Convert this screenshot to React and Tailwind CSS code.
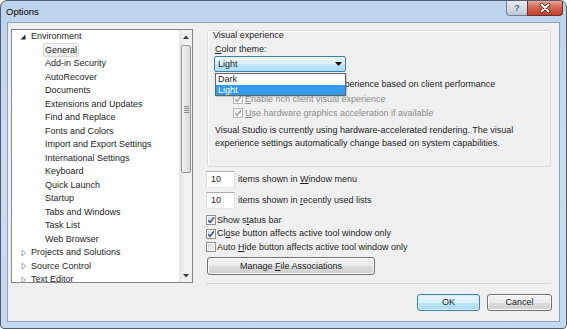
import React from "react";

function Check({ checked, disabled }) {
  return (
    <span
      className={
        disabled
          ? "w-[10px] h-[10px] shrink-0 border border-[#b8b8b8] bg-[#f4f4f4] flex items-center justify-center"
          : "w-[10px] h-[10px] shrink-0 border border-[#8e8f8f] bg-linear-to-br from-[#cdd1d6] to-[#f8f8f8] shadow-[inset_0_0_0_1px_#ffffff] flex items-center justify-center"
      }
    >
      {checked && (
        <svg width="8" height="8" viewBox="0 0 8 8">
          <path
            d="M1.2 4.2 L3.1 6.4 L6.9 1.2"
            fill="none"
            stroke={disabled ? "#a6a6a6" : "#3b4f8f"}
            strokeWidth="1.5"
          />
        </svg>
      )}
    </span>
  );
}

function Expanded() {
  return (
    <svg width="6" height="6" viewBox="0 0 6 6">
      <path d="M5.5 0.5 L5.5 5.5 L0.5 5.5 Z" fill="#262626" />
    </svg>
  );
}

function Collapsed() {
  return (
    <svg width="6" height="8" viewBox="0 0 6 8">
      <path d="M1 1 L4.8 4 L1 7 Z" fill="none" stroke="#a6a6a6" strokeWidth="1" />
    </svg>
  );
}

const children = [
  "Add-in Security",
  "AutoRecover",
  "Documents",
  "Extensions and Updates",
  "Find and Replace",
  "Fonts and Colors",
  "Import and Export Settings",
  "International Settings",
  "Keyboard",
  "Quick Launch",
  "Startup",
  "Tabs and Windows",
  "Task List",
  "Web Browser",
];

export default function App() {
  return (
    <div className="w-[567px] h-[329px] overflow-hidden bg-white font-['Liberation_Sans',Arial,sans-serif] text-[9px] text-[#1e1e1e] leading-none">
      <div className="w-full h-full flex flex-col border border-[#4f5d6e] rounded-t-[7px] rounded-b-[4px] bg-linear-to-b from-[#bcd3eb] via-[#cadef2] to-[#c4d9ee] px-[6px] pb-[6px]">
        {/* title bar */}
        <div className="h-[21px] shrink-0 flex items-start">
          <span className="mt-[6px] -ml-[1px] text-[9.5px] text-black">Options</span>
          <div className="ml-auto -mr-[3px] flex">
            <div className="w-[21px] h-[15px] border border-[#6f7f94] border-t-0 border-r-0 rounded-bl-[4px] bg-linear-to-b from-[#e4ecf5] via-[#d2dde9] to-[#b9c9dc] flex items-center justify-center text-[9px] font-bold text-[#5d6877]">
              ?
            </div>
            <div className="w-[36px] h-[15px] border border-[#6b3127] border-t-0 rounded-br-[4px] bg-linear-to-b from-[#e8a798] via-[#d0604a] to-[#c0432c] flex items-center justify-center">
              <svg width="12" height="10" viewBox="0 0 12 10">
                <path d="M2.5 1.5 L9.5 8.5 M9.5 1.5 L2.5 8.5" stroke="#5a2118" strokeWidth="3.6" strokeLinecap="round" />
                <path d="M2.5 1.5 L9.5 8.5 M9.5 1.5 L2.5 8.5" stroke="#ffffff" strokeWidth="2" strokeLinecap="round" />
              </svg>
            </div>
          </div>
        </div>

        {/* client area */}
        <div className="flex-1 border border-[#8fa2b8] bg-[#f0f0f0] flex flex-col pl-[3px] pr-[8px] pt-[6px]">
          <div className="h-[255px] flex items-start">
            {/* tree */}
            <div className="w-[182px] h-[254px] border border-[#828790] bg-white flex overflow-hidden">
              <div className="flex-1 overflow-hidden">
                <div className="h-[13.5px] flex items-center">
                  <span className="w-[19px] pl-[8px] flex items-center">
                    <Expanded />
                  </span>
                  <span>Environment</span>
                </div>
                <div className="h-[13.5px] flex items-center pl-[31px]">
                  <span className="h-[14px] px-[1px] flex items-center border border-[#d9d9d9] rounded-[2px] bg-linear-to-b from-[#f8f8f8] to-[#ececec]">
                    General
                  </span>
                </div>
                {children.map((c) => (
                  <div key={c} className="h-[13.5px] flex items-center pl-[33px]">
                    {c}
                  </div>
                ))}
                {["Projects and Solutions", "Source Control", "Text Editor"].map((c) => (
                  <div key={c} className="h-[13.5px] flex items-center">
                    <span className="w-[19px] pl-[9px] flex items-center">
                      <Collapsed />
                    </span>
                    <span>{c}</span>
                  </div>
                ))}
              </div>
              {/* scrollbar */}
              <div className="w-[13px] h-full flex flex-col bg-linear-to-r from-[#e6e6e6] via-[#f4f4f4] to-[#f0f0f0] border-l border-[#e8e8e8]">
                <div className="h-[13px] flex items-center justify-center">
                  <svg width="6" height="4" viewBox="0 0 6 4">
                    <path d="M0 4 L3 0.5 L6 4 Z" fill="#404040" />
                  </svg>
                </div>
                <div className="mt-[2px] mx-[1px] h-[128px] border border-[#959595] rounded-[2px] bg-linear-to-r from-[#f2f2f2] via-[#e6e6e6] to-[#d8d8d8] flex items-center justify-center">
                  <div className="flex flex-col gap-[1px]">
                    <div className="w-[5px] h-px bg-[#8a8a8a]" />
                    <div className="w-[5px] h-px bg-[#8a8a8a]" />
                    <div className="w-[5px] h-px bg-[#8a8a8a]" />
                    <div className="w-[5px] h-px bg-[#8a8a8a]" />
                  </div>
                </div>
                <div className="mt-auto h-[13px] flex items-center justify-center">
                  <svg width="6" height="4" viewBox="0 0 6 4">
                    <path d="M0 0 L3 3.5 L6 0 Z" fill="#404040" />
                  </svg>
                </div>
              </div>
            </div>

            {/* right column */}
            <div className="ml-[13px] flex-1 h-full flex flex-col">
              {/* group box */}
              <div className="mt-[1px] ml-[1px] h-[137px] border border-[#d5dfe5] rounded-[3px] pl-[5px] shadow-[inset_1px_1px_0_#ffffff]">
                <div className="h-[9px] leading-[9px]">Visual experience</div>
                <div className="mt-[3px] h-[12px] leading-[12px] pl-[2px]">
                  <u>C</u>olor theme:
                </div>
                <div className="relative mt-[1px] ml-[1px] w-[132px] h-[16px] border border-[#3c7fb1] rounded-[2px] bg-[linear-gradient(to_bottom,#eef7fd_0%,#dcf1fc_50%,#c2e7fc_50%,#acdcf6_100%)] flex items-center pl-[3px]">
                  <span>Light</span>
                  <svg className="ml-auto mr-[3px]" width="7" height="4" viewBox="0 0 7 4">
                    <path d="M0 0 L7 0 L3.5 4 Z" fill="#000000" />
                  </svg>
                  <div className="absolute z-10 top-[16px] left-[0px] w-[131px] h-[23px] border border-[#646464] bg-white p-[0px] shadow-[1px_1px_1px_rgba(0,0,0,0.15)]">
                    <div className="h-[11px] leading-[11px] pl-[2px]">Dark</div>
                    <div className="h-[10px] leading-[10px] pl-[2px] bg-[#3399ff] text-white">Light</div>
                  </div>
                </div>
                <div className="mt-[6px] h-[12px] pl-[3px] flex items-center gap-[1px]">
                  <Check checked />
                  <span>
                    <u>A</u>utomatically adjust visual experience based on client performance
                  </span>
                </div>
                <div className="mt-[3px] h-[12px] pl-[20px] flex items-center gap-[2px] text-[#8d8d8d]">
                  <Check checked disabled />
                  <span>
                    <u>E</u>nable rich client visual experience
                  </span>
                </div>
                <div className="mt-[2px] h-[12px] pl-[20px] flex items-center gap-[2px] text-[#8d8d8d]">
                  <Check checked disabled />
                  <span>
                    <u>U</u>se hardware graphics acceleration if available
                  </span>
                </div>
                <p className="mt-[5px] pl-[2px] leading-[13px]">
                  Visual Studio is currently using hardware-accelerated rendering. The visual
                  <br />
                  experience settings automatically change based on system capabilities.
                </p>
              </div>

              {/* text boxes */}
              <div className="mt-[4px] flex items-center">
                <div className="w-[29px] h-[17px] border border-[#abadb3] border-x-[#dbdfe6] border-b-[#e3e9ef] bg-white flex items-center pl-[4px]">
                  10
                </div>
                <span className="ml-[3px]">
                  items shown in <u>W</u>indow menu
                </span>
              </div>
              <div className="mt-[4px] flex items-center">
                <div className="w-[29px] h-[17px] border border-[#abadb3] border-x-[#dbdfe6] border-b-[#e3e9ef] bg-white flex items-center pl-[4px]">
                  10
                </div>
                <span className="ml-[3px]">
                  items shown in <u>r</u>ecently used lists
                </span>
              </div>

              {/* checkboxes */}
              <div className="mt-[4.5px] h-[13.5px] flex items-center gap-[1px]">
                <Check checked />
                <span>
                  Show s<u>t</u>atus bar
                </span>
              </div>
              <div className="h-[13.5px] flex items-center gap-[1px]">
                <Check checked />
                <span>
                  Cl<u>o</u>se button affects active tool window only
                </span>
              </div>
              <div className="h-[13.5px] flex items-center gap-[1px]">
                <Check />
                <span>
                  Auto <u>H</u>ide button affects active tool window only
                </span>
              </div>

              <div className="mt-[3px] ml-[1px] w-[168px] h-[18px] border border-[#707070] rounded-[3px] bg-[linear-gradient(to_bottom,#f2f2f2_0%,#ebebeb_50%,#dddddd_50%,#cfcfcf_100%)] shadow-[inset_0_0_0_1px_#fcfcfc] flex items-center justify-center">
                <span>
                  Manage <u>F</u>ile Associations
                </span>
              </div>

              <div className="mt-auto h-px bg-[#d5d5d5]" />
            </div>
          </div>

          {/* bottom buttons */}
          <div className="mt-[10px] -mr-[1px] flex justify-end gap-[7px]">
            <div className="w-[63px] h-[17px] border border-[#3c7fb1] rounded-[3px] bg-[linear-gradient(to_bottom,#eaf6fd_0%,#d9f0fc_50%,#bee6fd_50%,#a7d9f5_100%)] shadow-[inset_0_0_0_1px_#d8f0fc] flex items-center justify-center">
              OK
            </div>
            <div className="w-[65px] h-[17px] border border-[#707070] rounded-[3px] bg-[linear-gradient(to_bottom,#f2f2f2_0%,#ebebeb_50%,#dddddd_50%,#cfcfcf_100%)] shadow-[inset_0_0_0_1px_#fcfcfc] flex items-center justify-center">
              Cancel
            </div>
          </div>
        </div>
      </div>
    </div>
  );
}
